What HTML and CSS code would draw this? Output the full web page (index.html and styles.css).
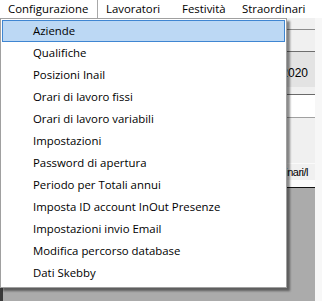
FILE: index.html
```html
<!DOCTYPE html>
<html lang="it">
<head>
    <meta charset="UTF-8">
    <title>Gestione Presenze</title>
    <link rel="stylesheet" href="styles.css">
</head>
<body>
    <div class="window">
        <nav class="menubar">
            <div class="menubar-item is-open">Configurazione</div>
            <div class="menubar-item item-lavoratori">Lavoratori</div>
            <div class="menubar-item item-festivita">Festività</div>
            <div class="menubar-item">Straordinari</div>
        </nav>

        <div class="workspace">
            <div class="panel">
                <div class="strip strip-top"></div>
                <div class="strip strip-tools"></div>
                <div class="year-row">
                    <span class="year-field">2020</span>
                </div>
                <div class="strip strip-gap"></div>
                <div class="strip strip-white"></div>
                <div class="strip strip-grey"></div>
                <div class="caption-row">Ore ordinari/straordinari/disciplinari/l</div>
                <div class="strip strip-end"></div>
                <div class="panel-bottom"></div>
            </div>
            <div class="side-strip"></div>
        </div>

        <!-- menu a tendina aperto -->
        <ul class="dropdown">
            <li class="dropdown-item is-hover">Aziende</li>
            <li class="dropdown-item">Qualifiche</li>
            <li class="dropdown-item">Posizioni Inail</li>
            <li class="dropdown-item">Orari di lavoro fissi</li>
            <li class="dropdown-item">Orari di lavoro variabili</li>
            <li class="dropdown-item">Impostazioni</li>
            <li class="dropdown-item">Password di apertura</li>
            <li class="dropdown-item">Periodo per Totali annui</li>
            <li class="dropdown-item">Imposta ID account InOut Presenze</li>
            <li class="dropdown-item">Impostazioni invio Email</li>
            <li class="dropdown-item">Modifica percorso database</li>
            <li class="dropdown-item">Dati Skebby</li>
        </ul>
    </div>
</body>
</html>
```

FILE: styles.css
```css
:root {
    --menu-font: 'Open Sans', 'Noto Sans', sans-serif;
    --hover-bg: #bcd8f4;
    --hover-border: #3f86d2;
    --panel-bg: #f0f0f0;
}

* {
    margin: 0;
    padding: 0;
    box-sizing: border-box;
}

body {
    width: 322px;
    height: 301px;
    overflow: hidden;
    background: #f0f0f0;
    font-family: var(--menu-font);
    color: #000;
}

.window {
    position: relative;
    width: 322px;
    height: 301px;
    display: flex;
    flex-direction: column;
}

.menubar {
    height: 18px;
    display: flex;
    background: #fff;
    font-size: 11.4px;
    line-height: 18px;
}

.menubar-item {
    padding: 0 7px 0 8px;
    white-space: nowrap;
}

.menubar-item.is-open {
    width: 98px;
    border-right: 1px solid #a8a8a8;
    background: #fff;
}

.item-lavoratori {
    width: 76px;
}

.item-festivita {
    width: 60px;
}

.workspace {
    flex: 1;
    display: flex;
}

.panel {
    flex: 1;
    display: flex;
    flex-direction: column;
    background: var(--panel-bg);
}

.side-strip {
    width: 7px;
    background: #f7f7f7;
}

.strip-top {
    height: 12px;
    border-bottom: 1px solid #8c8c8c;
}

.strip-tools {
    height: 22px;
    border-bottom: 1px solid #6e6e6e;
}

.year-row {
    height: 35px;
    display: flex;
    justify-content: flex-end;
    background: #e3e3e3;
    padding: 15px 7px 0 0;
}

.year-field {
    font-family: 'Liberation Sans', Arial, sans-serif;
    font-size: 12px;
    line-height: 12px;
}

.strip-gap {
    height: 8px;
    border-bottom: 1px solid #6a6a6a;
}

.strip-white {
    height: 23px;
    background: #fff;
    border-bottom: 1px solid #a0a0a0;
}

.strip-grey {
    height: 45px;
}

.caption-row {
    height: 17px;
    border-top: 1px solid #fafafa;
    padding: 2px 7px 0 0;
    font-family: 'Liberation Sans', Arial, sans-serif;
    font-size: 11px;
    line-height: 12px;
    letter-spacing: -0.5px;
    text-align: right;
    white-space: nowrap;
    overflow: hidden;
}

.strip-end {
    height: 8px;
    background: #fbfbfb;
    border-bottom: 1px solid #111;
}

.panel-bottom {
    flex: 1;
    background: #ababab;
    border-left: 3px solid #3a3a3a;
}

.dropdown {
    position: absolute;
    top: 18px;
    left: 0;
    width: 287px;
    list-style: none;
    background: #fff;
    border: 1px solid #a0a0a0;
    padding: 1px 1px 3px 1px;
    box-shadow: 3px 3px 2px rgba(0, 0, 0, 0.45);
    font-size: 11.4px;
}

.dropdown-item {
    height: 22px;
    line-height: 20px;
    padding-left: 30px;
    border: 1px solid transparent;
    white-space: nowrap;
}

.dropdown-item.is-hover {
    background: var(--hover-bg);
    border-color: var(--hover-border);
}
```
